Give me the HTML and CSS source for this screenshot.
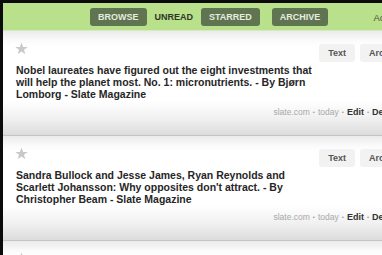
FILE: index.html
```html
<!DOCTYPE html>
<html>
<head>
<meta charset="utf-8">
<link rel="stylesheet" href="styles.css">
</head>
<body>
<div class="screen">
  <header class="nav">
    <a class="tab btn">BROWSE</a>
    <span class="tab current">UNREAD</span>
    <a class="tab btn">STARRED</a>
    <a class="tab btn archive">ARCHIVE</a>
    <span class="account">Account</span>
  </header>
  <main class="list">
    <article class="item">
      <div class="top">
        <div class="main">
          <svg class="star" viewBox="0 0 24 24" width="13" height="13"><polygon points="12,1 15,9 23.5,9 16.5,14.2 19.2,22.5 12,17.4 4.8,22.5 7.5,14.2 0.5,9 9,9"/></svg>
          <h2 class="title">Nobel laureates have figured out the eight investments that will help the planet most. No. 1: micronutrients. - By Bjørn Lomborg - Slate Magazine</h2>
        </div>
        <div class="actions">
          <a class="action">Text</a>
          <a class="action">Archive</a>
        </div>
      </div>
      <div class="meta">
        <span class="src">slate.com</span><span class="dot">•</span><span class="src">today</span><span class="dot">•</span><a class="link">Edit</a><span class="dot">•</span><a class="link">Delete</a>
      </div>
    </article>
    <article class="item">
      <div class="top">
        <div class="main">
          <svg class="star" viewBox="0 0 24 24" width="13" height="13"><polygon points="12,1 15,9 23.5,9 16.5,14.2 19.2,22.5 12,17.4 4.8,22.5 7.5,14.2 0.5,9 9,9"/></svg>
          <h2 class="title">Sandra Bullock and Jesse James, Ryan Reynolds and Scarlett Johansson: Why opposites don't attract. - By Christopher Beam - Slate Magazine</h2>
        </div>
        <div class="actions">
          <a class="action">Text</a>
          <a class="action">Archive</a>
        </div>
      </div>
      <div class="meta">
        <span class="src">slate.com</span><span class="dot">•</span><span class="src">today</span><span class="dot">•</span><a class="link">Edit</a><span class="dot">•</span><a class="link">Delete</a>
      </div>
    </article>
    <article class="item">
      <div class="top">
        <div class="main">
          <svg class="star" viewBox="0 0 24 24" width="13" height="13"><polygon points="12,1 15,9 23.5,9 16.5,14.2 19.2,22.5 12,17.4 4.8,22.5 7.5,14.2 0.5,9 9,9"/></svg>
        </div>
      </div>
    </article>
  </main>
</div>
</body>
</html>
```
FILE: styles.css
```css
html, body {
  margin: 0;
  padding: 0;
  background: #0b0b0b;
  overflow: hidden;
  height: 255px;
}
.screen {
  margin: 3px 0 0 3px;
  width: 420px;
  font-family: "Liberation Sans", Arial, sans-serif;
  background: #fff;
}
.nav {
  height: 28px;
  background: #b9e08b;
  display: flex;
  align-items: center;
  padding-left: 87px;
  box-sizing: border-box;
  border-bottom: 1px solid #d6e9c2;
}
.tab {
  font-size: 9px;
  font-weight: bold;
  height: 18px;
  line-height: 18px;
  box-sizing: border-box;
}
.btn {
  background: #5f7451;
  color: #e6ecdf;
  border-radius: 3px;
  padding: 0 8px;
  margin-top: 1px;
}
.current {
  color: #2e3628;
  margin: 0 8px;
}
.archive {
  margin-left: 12px;
}
.account {
  font-size: 9.5px;
  color: #4a5540;
  margin-left: 45px;
  margin-top: 2px;
}
.item {
  height: 105px;
  box-sizing: border-box;
  padding: 11px 12px 0 12px;
  background: linear-gradient(to bottom, #ebebeb 0px, #fbfbfb 10px, #fff 16px, #fff 70px, #f0f0f0 88px, #dcdcdc 104px);
  border-bottom: 1px solid #c4c4c4;
}
.top {
  display: flex;
  justify-content: space-between;
}
.main {
  width: 300px;
}
.star {
  display: block;
  fill: #c9c9c9;
}
.title {
  margin: 9px 0 0 1px;
  font-size: 10.5px;
  line-height: 12px;
  font-weight: bold;
  color: #262626;
}
.actions {
  display: flex;
  gap: 5px;
  padding-top: 2px;
}
.action {
  background: #f2f2f2;
  color: #555;
  font-size: 9px;
  font-weight: bold;
  height: 18px;
  line-height: 18px;
  padding: 0 9px;
  border-radius: 3px;
}
.meta {
  display: flex;
  justify-content: flex-end;
  align-items: center;
  font-size: 8.5px;
  margin-top: 7px;
  padding-right: 12px;
}
.src {
  color: #a8a8a8;
}
.dot {
  color: #999;
  font-size: 6px;
  margin: 0 3px;
}
.link {
  color: #333;
  font-weight: bold;
  font-size: 9px;
}
```
